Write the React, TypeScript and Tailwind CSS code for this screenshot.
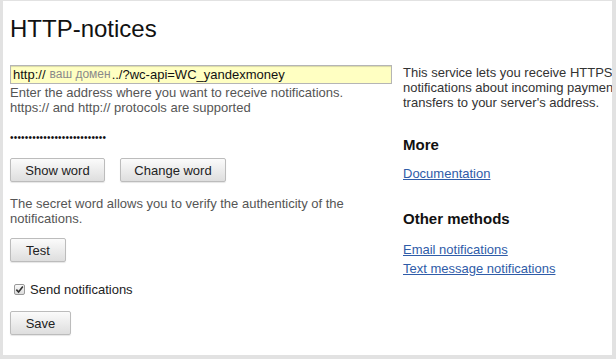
export default function App() {
  return (
    <div className="h-[359px] w-[616px] overflow-hidden border-t border-r-[4px] border-b-[4px] border-l-[3px] border-[#e2e2e2] bg-white font-['Liberation_Sans',Arial,sans-serif] text-[13px] leading-[15px] text-[#333]">
      <div className="pl-[7px] pt-[14px]">
        <h1 className="text-[24px] leading-[28px] text-[#111]">HTTP-notices</h1>
        <div className="mt-[22px] flex">
          <div className="w-[382px] shrink-0">
            <div className="flex h-[19px] items-center border border-[#b5b5b5] bg-[#ffffc2] px-[2px] text-[13px] text-[#111] shadow-[inset_0_1px_1px_rgba(0,0,0,0.15)]">
              <span>http://</span>
              <span className="ml-[4px] text-[12px] text-[#8a8a8a]">ваш домен</span>
              <span className="ml-[1px]">../?wc-api=WC_yandexmoney</span>
            </div>
            <p className="mt-[1px] text-[#555]">
              Enter the address where you want to receive notifications.
              <br />
              https:// and http:// protocols are supported
            </p>
            <div className="mt-[15px] text-[10px] leading-[15px] tracking-[0.2px] text-[#111]">
              ••••••••••••••••••••••••••
            </div>
            <div className="mt-[13px] flex gap-[15px]">
              <Btn className="w-[95px]">Show word</Btn>
              <Btn className="w-[106px]">Change word</Btn>
            </div>
            <p className="mt-[14px] text-[#555]">
              The secret word allows you to verify the authenticity of the
              <br />
              notifications.
            </p>
            <div className="mt-[12px]">
              <Btn className="w-[56px]">Test</Btn>
            </div>
            <label className="mt-[20px] flex items-center gap-[5px] text-[#222]">
              <span className="ml-[4px] flex h-[11px] w-[11px] items-center justify-center rounded-[2px] border border-[#999] bg-gradient-to-b from-[#fafafa] to-[#dcdcdc]">
                <svg viewBox="0 0 10 10" className="h-[9px] w-[9px]">
                  <path d="M1.5 5.2 L4 7.8 L8.7 1.8" fill="none" stroke="#333" strokeWidth="1.8" />
                </svg>
              </span>
              <span className="text-[13px]">Send notifications</span>
            </label>
            <div className="mt-[14px]">
              <Btn className="w-[61px]">Save</Btn>
            </div>
          </div>
          <div className="ml-[11px] w-[232px] shrink-0 text-[#333]">
            <p>
              This service lets you receive HTTPS notifications about incoming payment transfers to your server's address.
            </p>
            <h2 className="mt-[26px] text-[15px] font-bold leading-[18px] text-[#111]">More</h2>
            <a href="#" className="mt-[12px] block text-[#2f5ca8] underline">Documentation</a>
            <h2 className="mt-[29px] text-[15px] font-bold leading-[18px] text-[#111]">Other methods</h2>
            <a href="#" className="mt-[14px] block text-[#2f5ca8] underline">Email notifications</a>
            <a href="#" className="mt-[4px] block text-[#2f5ca8] underline">Text message notifications</a>
          </div>
        </div>
      </div>
    </div>
  );
}

function Btn({ children, className }: { children: React.ReactNode; className?: string }) {
  return (
    <button
      className={`flex h-[24px] items-center justify-center rounded-[2px] border border-[#bcbcbc] bg-gradient-to-b from-[#fbfbfb] to-[#dedede] text-[13px] text-[#222] shadow-[0_1px_1px_rgba(0,0,0,0.1)] ${className ?? ""}`}
    >
      {children}
    </button>
  );
}
